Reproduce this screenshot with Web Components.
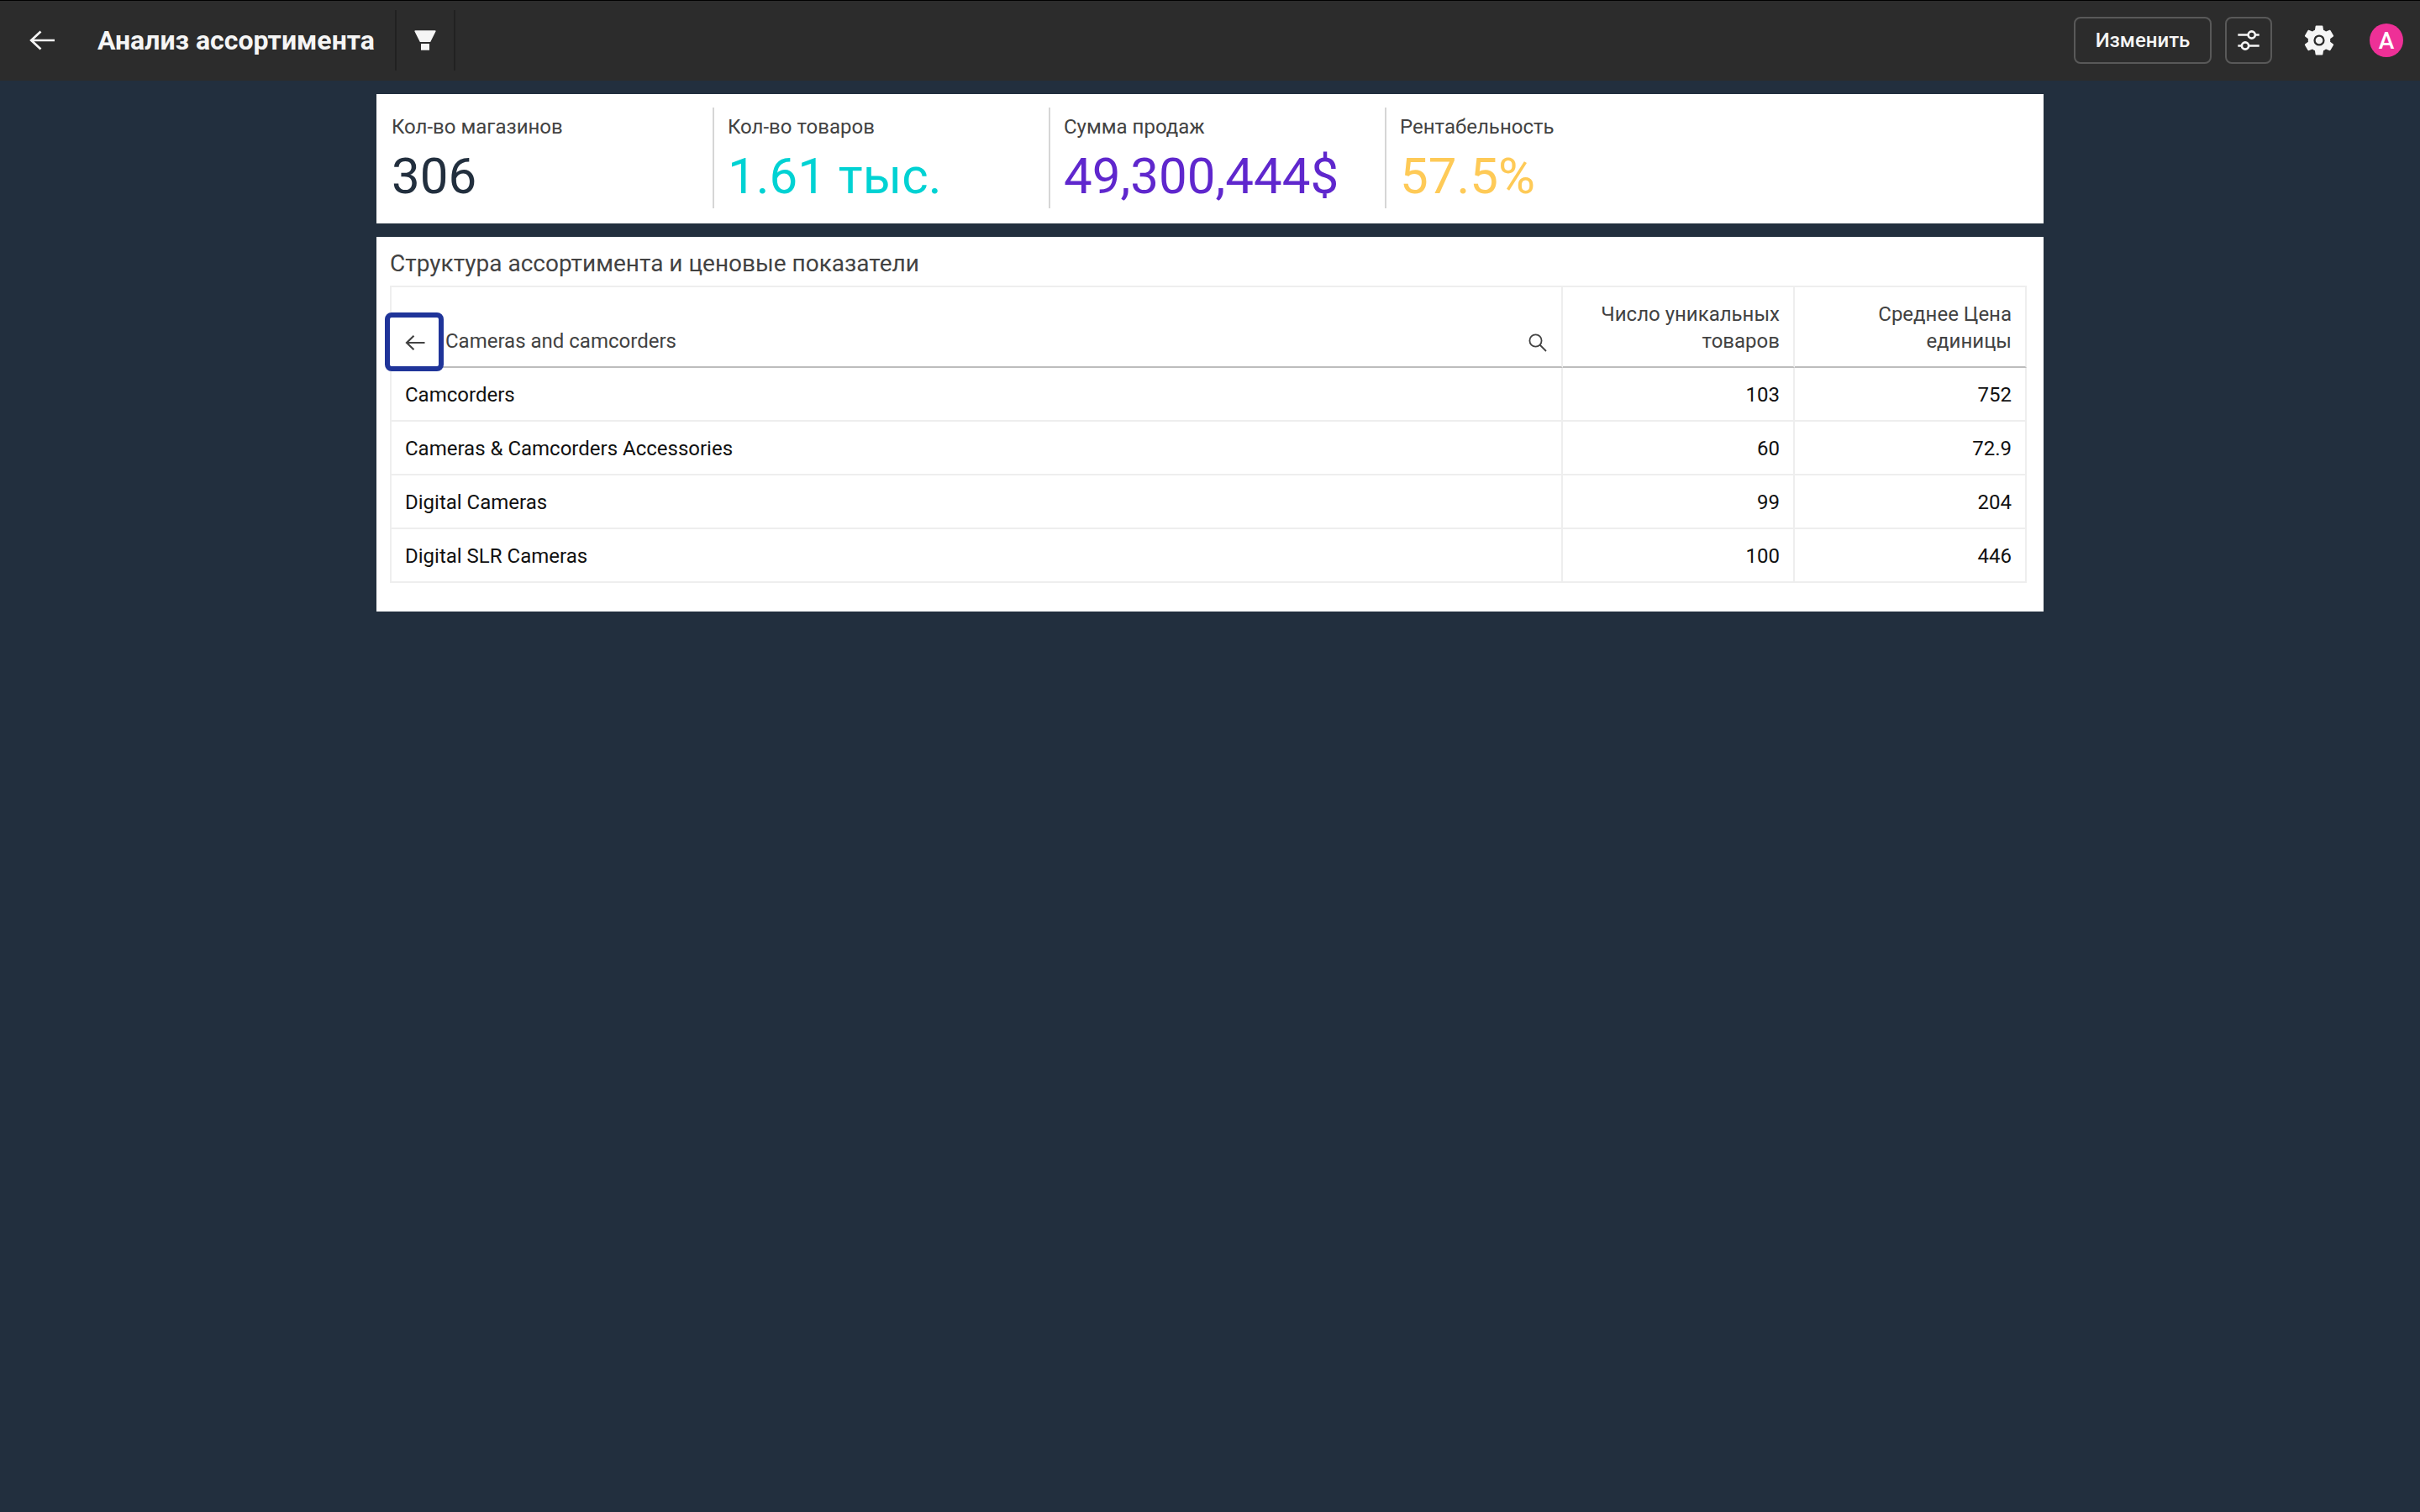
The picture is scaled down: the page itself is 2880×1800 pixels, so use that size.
<!DOCTYPE html>
<html lang="ru">
<head>
<meta charset="utf-8">
<title>Анализ ассортимента</title>
<style>
  body {
    margin: 0;
    min-height: 1800px;
    background: #222f3e;
    font-family: Roboto, "Noto Sans", sans-serif;
    font-size: 24px;
    color: #424242;
  }
</style>
</head>
<body>
<app-header heading="Анализ ассортимента">
  <outline-button>Изменить</outline-button>
  <outline-button square><ui-icon name="sliders"></ui-icon></outline-button>
  <ui-icon name="gear"></ui-icon>
  <user-avatar>А</user-avatar>
</app-header>
<dash-board>
  <kpi-strip>
    <kpi-card label="Кол-во магазинов" style="--value: #222f3e">306</kpi-card>
    <kpi-card label="Кол-во товаров" style="--value: #00d2d3">1.61 тыс.</kpi-card>
    <kpi-card label="Сумма продаж" style="--value: #5f27cd">49,300,444$</kpi-card>
    <kpi-card label="Рентабельность" style="--value: #feca57">57.5%</kpi-card>
  </kpi-strip>
  <data-panel heading="Структура ассортимента и ценовые показатели">
    <drill-table></drill-table>
  </data-panel>
</dash-board>

<script>
const icons = {
  back: `<svg width="32" height="24" viewBox="0 0 32 24" fill="none" stroke="currentColor" stroke-width="2.7"><path d="M31 12H3M14.500 1.500 3.200 12l11.300 10.500"/></svg>`,
  backSmall: `<svg width="24" height="20" viewBox="0 0 24 20" fill="none" stroke="currentColor" stroke-width="2.200"><path d="M23.500 10H2M10.500 1.800 2 10l8.500 8.200"/></svg>`,
  funnel: `<svg width="26" height="24" viewBox="0 0 26 24" fill="currentColor"><path d="M.5 1.500Q0 .2 1.300.2h23.400q1.300 0 .8 1.300L19.200 14H6.800ZM8 16h10v7.800H8Z"/></svg>`,
  sliders: `<svg width="26" height="24" viewBox="0 0 26 24" fill="none" stroke="currentColor" stroke-width="2.600"><path d="M.3 5.500h12M21 5.500h4.700M.3 18.500h4.500M13.500 18.500h12.200"/><circle cx="16.700" cy="5.500" r="4.100"/><circle cx="9" cy="18.500" r="4.100"/></svg>`,
  gear: `<svg width="44" height="44" viewBox="0 0 24 24" fill="currentColor"><path d="M19.140 12.940c.04-.3.060-.61.060-.94 0-.32-.02-.64-.07-.94l2.030-1.580a.49.49 0 0 0 .12-.61l-1.920-3.320a.49.49 0 0 0-.59-.22l-2.390.96c-.5-.38-1.030-.7-1.620-.94l-.36-2.540a.48.48 0 0 0-.48-.41h-3.840c-.24 0-.43.17-.47.41l-.36 2.540c-.59.24-1.130.57-1.620.94l-2.390-.96a.48.48 0 0 0-.59.22L2.740 8.870a.48.48 0 0 0 .12.610l2.030 1.580c-.05.3-.09.63-.09.94s.02.64.07.94l-2.030 1.580a.49.49 0 0 0-.12.610l1.920 3.320c.12.22.37.29.59.22l2.390-.96c.5.38 1.030.7 1.620.94l.36 2.540c.05.24.24.41.48.41h3.840c.24 0 .44-.17.47-.41l.36-2.540c.59-.24 1.130-.56 1.620-.94l2.390.96c.22.08.47 0 .59-.22l1.920-3.320a.48.48 0 0 0-.12-.61zM12 15.600a3.600 3.600 0 1 1 0-7.200 3.600 3.600 0 0 1 0 7.200z"/><circle cx="12" cy="12" r="2.350"/></svg>`,
  search: `<svg width="22" height="22" viewBox="0 0 22 22" fill="none" stroke="currentColor" stroke-width="1.800"><circle cx="8.500" cy="8.500" r="7.100"/><path d="m13.500 13.500 7.500 7.500"/></svg>`,
};

class UiIcon extends HTMLElement {
  connectedCallback() {
    const root = this.attachShadow({ mode: "open" });
    root.innerHTML = /* html */ `
      <style>
        :host { display: inline-flex; }
        svg { display: block; }
      </style>
      ${icons[this.getAttribute("name")]}
    `;
  }
}

class OutlineButton extends HTMLElement {
  connectedCallback() {
    const root = this.attachShadow({ mode: "open" });
    root.innerHTML = /* html */ `
      <style>
        :host {
          display: flex;
          align-items: center;
          justify-content: center;
          box-sizing: border-box;
          width: 164px;
          height: 56px;
          border: 2px solid #595959;
          border-radius: 8px;
          font-weight: 500;
          cursor: pointer;
        }
        :host([square]) { width: 56px; }
      </style>
      <slot></slot>
    `;
  }
}

class UserAvatar extends HTMLElement {
  connectedCallback() {
    const root = this.attachShadow({ mode: "open" });
    root.innerHTML = /* html */ `
      <style>
        :host {
          display: flex;
          align-items: center;
          justify-content: center;
          width: 40px;
          height: 40px;
          border-radius: 50%;
          background: #ee3097;
          color: #fff;
          font-size: 28px;
          font-weight: 500;
        }
      </style>
      <slot></slot>
    `;
  }
}

class AppHeader extends HTMLElement {
  connectedCallback() {
    const root = this.attachShadow({ mode: "open" });
    root.innerHTML = /* html */ `
      <style>
        :host {
          display: flex;
          align-items: center;
          box-sizing: border-box;
          height: 96px;
          padding: 0 20px 0 34px;
          background: #2c2c2c;
          box-shadow: inset 0 1px #000;
          color: #f5f5f5;
        }
        h1 {
          box-sizing: border-box;
          width: 404px;
          margin: 0;
          padding-left: 50px;
          font-size: 32px;
          font-weight: 700;
          line-height: 40px;
          white-space: nowrap;
        }
        .filter {
          display: flex;
          align-items: center;
          justify-content: center;
          width: 68px;
          height: 72px;
          border: solid #212121;
          border-width: 0 2px;
        }
        .actions {
          display: flex;
          align-items: center;
          margin-left: auto;
        }
        ::slotted(outline-button) { margin-right: 16px; }
        ::slotted(ui-icon) { margin: 0 38px 0 18px; }
      </style>
      <ui-icon name="back"></ui-icon>
      <h1>${this.getAttribute("heading")}</h1>
      <div class="filter"><ui-icon name="funnel"></ui-icon></div>
      <div class="actions"><slot></slot></div>
    `;
  }
}

class DashBoard extends HTMLElement {
  connectedCallback() {
    const root = this.attachShadow({ mode: "open" });
    root.innerHTML = /* html */ `
      <style>
        :host {
          display: flex;
          flex-direction: column;
          gap: 16px;
          width: 1984px;
          margin: 16px auto 0;
        }
      </style>
      <slot></slot>
    `;
  }
}

class KpiStrip extends HTMLElement {
  connectedCallback() {
    const root = this.attachShadow({ mode: "open" });
    root.innerHTML = /* html */ `
      <style>
        :host {
          display: flex;
          box-sizing: border-box;
          height: 154px;
          padding: 16px 0 18px;
          background: #fff;
        }
        ::slotted(kpi-card:not(:first-child)) { border-color: #d6d6d6; }
      </style>
      <slot></slot>
    `;
  }
}

class KpiCard extends HTMLElement {
  connectedCallback() {
    const root = this.attachShadow({ mode: "open" });
    root.innerHTML = /* html */ `
      <style>
        :host {
          box-sizing: border-box;
          width: 400px;
          padding: 7px 0 0 16px;
          border-left: 2px solid transparent;
          white-space: nowrap;
        }
        .label {
          line-height: 32px;
        }
        .value {
          font-size: 60px;
          line-height: 72px;
          margin-top: 7px;
          color: var(--value);
        }
      </style>
      <div class="label">${this.getAttribute("label")}</div>
      <div class="value"><slot></slot></div>
    `;
  }
}

class DataPanel extends HTMLElement {
  connectedCallback() {
    const root = this.attachShadow({ mode: "open" });
    root.innerHTML = /* html */ `
      <style>
        :host {
          display: block;
          box-sizing: border-box;
          height: 446px;
          padding: 12px 20px 0 16px;
          background: #fff;
        }
        h2 {
          margin: 0 0 6px;
          font-size: 28px;
          font-weight: 400;
          line-height: 40px;
        }
      </style>
      <h2>${this.getAttribute("heading")}</h2>
      <slot></slot>
    `;
  }
}

class DrillTable extends HTMLElement {
  rows = [
    ["Camcorders", "103", "752"],
    ["Cameras &amp; Camcorders Accessories", "60", "72.9"],
    ["Digital Cameras", "99", "204"],
    ["Digital SLR Cameras", "100", "446"],
  ];

  connectedCallback() {
    const root = this.attachShadow({ mode: "open" });
    root.innerHTML = /* html */ `
      <style>
        :host {
          display: block;
          border: solid #eee;
          border-width: 2px 0 0 2px;
        }
        .row {
          display: grid;
          grid-template-columns: 1394px 276px 276px;
          height: 64px;
          line-height: 32px;
          color: #111;
        }
        .row > div {
          display: flex;
          align-items: center;
          justify-content: flex-end;
          box-sizing: border-box;
          padding: 2px 16px 0;
          border: solid #eee;
          border-width: 0 2px 2px 0;
          text-align: right;
        }
        .row > div:first-child { justify-content: flex-start; }
        .head {
          height: 96px;
          color: #424242;
        }
        .head > div {
          align-items: flex-end;
          padding-bottom: 14px;
          border-bottom-color: #bdbdbd;
        }
        .head > .drill {
          position: relative;
          padding-left: 64px;
        }
        .back {
          position: absolute;
          left: -8px;
          top: 30px;
          display: flex;
          align-items: center;
          justify-content: center;
          box-sizing: border-box;
          width: 70px;
          height: 70px;
          padding: 2px 0 0 2px;
          border: 6px solid #1f3499;
          border-radius: 8px;
          background: #fff;
        }
        .search { margin: 0 1px 3px auto; }
      </style>
      <div class="row head">
        <div class="drill">
          <span class="back"><ui-icon name="backSmall"></ui-icon></span>
          <span>Cameras and camcorders</span>
          <ui-icon class="search" name="search"></ui-icon>
        </div>
        <div>Число уникальных<br>товаров</div>
        <div>Среднее Цена<br>единицы</div>
      </div>
      ${this.rows
        .map((row) => `<div class="row">${row.map((cell) => `<div>${cell}</div>`).join("")}</div>`)
        .join("")}
    `;
  }
}

customElements.define("ui-icon", UiIcon);
customElements.define("outline-button", OutlineButton);
customElements.define("user-avatar", UserAvatar);
customElements.define("app-header", AppHeader);
customElements.define("dash-board", DashBoard);
customElements.define("kpi-strip", KpiStrip);
customElements.define("kpi-card", KpiCard);
customElements.define("data-panel", DataPanel);
customElements.define("drill-table", DrillTable);
</script>
</body>
</html>
